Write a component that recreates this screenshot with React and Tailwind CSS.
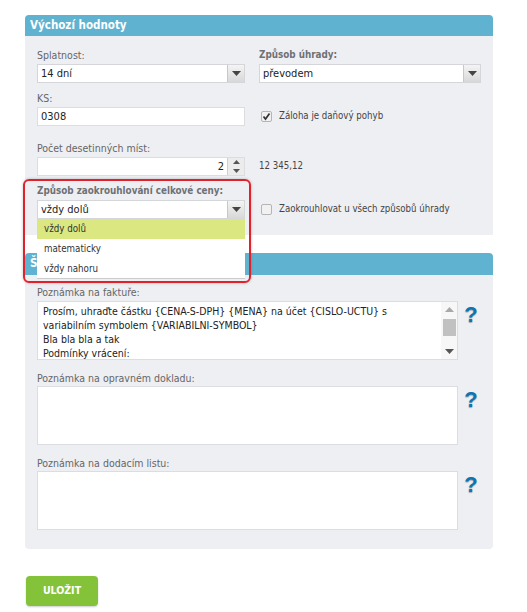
const font = { fontFamily: '"DejaVu Sans Condensed", "DejaVu Sans", sans-serif', fontStretch: "condensed" };

function Arrow({ up = false, className = "", w = 9, h = 5 }) {
  return (
    <svg width={w} height={h} viewBox="0 0 11 6" preserveAspectRatio="none" className={className}>
      <path d={up ? "M5.5 0 L11 6 L0 6 Z" : "M0 0 L11 0 L5.5 6 Z"} fill="currentColor" />
    </svg>
  );
}

function Select({ value, className = "" }) {
  return (
    <div className={`flex h-[19px] items-stretch border border-[#d4d6da] bg-white ${className}`}>
      <div className="flex-1 pl-[3px] text-[11px] leading-[17px] text-[#222]">{value}</div>
      <div className="flex w-[17px] items-center justify-center border-l border-[#c6c8cc] bg-gradient-to-b from-[#f4f4f4] to-[#d8d8d8] text-[#444]">
        <Arrow />
      </div>
    </div>
  );
}

function Label({ children, bold = false, className = "" }) {
  return <div className={`leading-[12px] ${bold ? "text-[9.8px] font-bold text-[#6f7175]" : "text-[10.5px] text-[#666]"} ${className}`}>{children}</div>;
}

function Check({ checked = false }) {
  return (
    <div className="flex h-[11px] w-[11px] items-center justify-center rounded-[2px] border border-[#b5b5b5] bg-[#f1f1f1]">
      {checked && (
        <svg width="9" height="9" viewBox="0 0 9 9">
          <path d="M1.5 4.5 L3.5 7 L7.5 1.5" fill="none" stroke="#333" strokeWidth="1.7" />
        </svg>
      )}
    </div>
  );
}

function Help() {
  return (
    <div className="ml-[6px] mt-[3px] w-[14px] text-center text-[22px] font-bold leading-[22px] text-[#0e75b0] [text-shadow:0_1px_1px_rgba(0,0,0,0.3)]" style={{ fontFamily: '"Liberation Sans", sans-serif' }}>
      ?
    </div>
  );
}

function Note({ label, className = "", labelClass = "mb-[3px]", children, scroll = false }) {
  return (
    <div className={className}>
      <Label className={labelClass}>{label}</Label>
      <div className="flex items-start">
        <div className="relative h-[59px] w-[421px] border border-[#dcdde0] bg-white">
          {children}
          {scroll && (
            <div className="absolute inset-y-0 right-0 flex w-[16px] flex-col items-center justify-between bg-[#f7f7f7] py-[5px] text-[#555]">
              <Arrow up className="text-[#a8a8a8]" />
              <div className="absolute left-[2px] top-[17px] h-[17px] w-[13px] bg-[#c1c1c1]" />
              <Arrow />
            </div>
          )}
        </div>
        <Help />
      </div>
    </div>
  );
}

export default function App() {
  return (
    <div className="relative h-[612px] w-[527px] overflow-hidden bg-white pl-[25px] pt-[15px]" style={font}>
      <div className="w-[468px]">
        <section>
          <div className="flex h-[21px] items-center rounded-t-[4px] bg-[#5fb3d1] pl-[5px] text-[11.5px] font-bold text-white">Výchozí hodnoty</div>
          <div className="h-[199px] bg-[#eeeff3] px-[12px] pt-[13px]">
            <div className="grid grid-cols-[208px_222px] gap-x-[14px]">
              <div>
                <Label className="mb-[3px]">Splatnost:</Label>
                <Select value="14 dní" />
              </div>
              <div>
                <Label bold className="mb-[3px]">Způsob úhrady:</Label>
                <Select value="převodem" />
              </div>
            </div>
            <div className="mt-[9px] grid grid-cols-[208px_222px] gap-x-[14px]">
              <div>
                <Label className="mb-[3px]">KS:</Label>
                <div className="h-[19px] border border-[#dcdde0] bg-white pl-[3px] text-[11px] leading-[17px] text-[#222]">0308</div>
              </div>
              <div className="flex items-center gap-[7px] pl-[2px] pt-[15px] text-[9.6px] text-[#444]">
                <Check checked />
                Záloha je daňový pohyb
              </div>
            </div>
            <div className="mt-[16px] grid grid-cols-[208px_222px] gap-x-[14px]">
              <div>
                <Label className="mb-[3px]">Počet desetinných míst:</Label>
                <div className="flex h-[19px] border border-[#dcdde0] bg-white">
                  <div className="flex-1 pr-[3px] text-right text-[11px] leading-[17px] text-[#222]">2</div>
                  <div className="flex w-[17px] flex-col items-center justify-between border-l border-[#d0d0d0] bg-[#ececec] py-[2px] text-[#555]">
                    <Arrow up w={7} h={4} />
                    <Arrow w={7} h={4} />
                  </div>
                </div>
              </div>
              <div className="flex items-center pt-[15px] text-[9.6px] text-[#444]">12 345,12</div>
            </div>
            <div className="mt-[9px] grid grid-cols-[208px_222px] gap-x-[14px]">
              <div className="relative z-10">
                <Label bold className="mb-[3px]">Způsob zaokrouhlování celkové ceny:</Label>
                <Select value="vždy dolů" />
                <div className="absolute left-0 top-[34px] w-[208px] border-b border-[#ccc] bg-white text-[9.7px] text-[#333]">
                  <div className="h-[20px] bg-[#dbe882] pl-[7px] leading-[20px]">vždy dolů</div>
                  <div className="h-[20px] pl-[7px] leading-[20px]">matematicky</div>
                  <div className="h-[19px] pl-[7px] leading-[19px]">vždy nahoru</div>
                </div>
              </div>
              <div className="flex items-center gap-[7px] pl-[2px] pt-[15px] text-[9.6px] text-[#444]">
                <Check />
                Zaokrouhlovat u všech způsobů úhrady
              </div>
            </div>
          </div>
        </section>

        <section className="mt-[18px]">
          <div className="flex h-[22px] items-center rounded-t-[4px] bg-[#5fb3d1] pl-[5px] text-[11.5px] font-bold text-white">Š</div>
          <div className="h-[274px] rounded-b-[4px] bg-[#eeeff3] px-[12px] pt-[11px]">
            <Note label="Poznámka na faktuře:" scroll>
              <div className="whitespace-pre px-[5px] pt-[2px] text-[10.5px] leading-[14px] text-[#222]">
                {"Prosím, uhraďte částku {CENA-S-DPH} {MENA} na účet {CISLO-UCTU} s\nvariabilním symbolem {VARIABILNI-SYMBOL}\nBla bla bla a tak\nPodmínky vrácení:"}
              </div>
            </Note>
            <Note label="Poznámka na opravném dokladu:" labelClass="mb-[2px]" className="mt-[12px]" />
            <Note label="Poznámka na dodacím listu:" labelClass="mb-[2px]" className="mt-[12px]" />
          </div>
        </section>

        <button className="ml-px mt-[27px] flex h-[30px] w-[72px] items-center justify-center rounded-[4px] bg-[#84c23a] text-[10.5px] font-bold text-white shadow-[0_1px_2px_rgba(0,0,0,0.2)]">
          ULOŽIT
        </button>
      </div>

      <div className="pointer-events-none absolute left-[23px] top-[179px] z-20 h-[104px] w-[228px] rounded-[6px] border-2 border-[#e0222c] shadow-[0_0_3px_rgba(0,0,0,0.25)]" />
    </div>
  );
}
